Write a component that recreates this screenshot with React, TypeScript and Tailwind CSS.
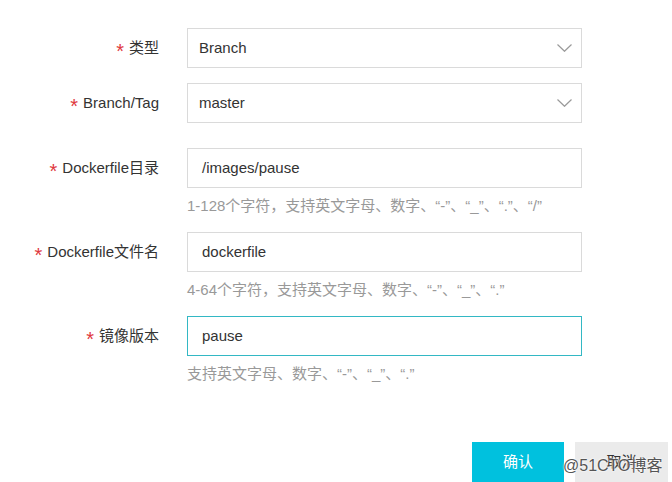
import React from "react";

const Chevron = () => (
  <svg width="15" height="8" viewBox="0 0 15 8" className="shrink-0">
    <path d="M0.5 0.5 L7.5 7.3 L14.5 0.5" fill="none" stroke="#9a9a9a" strokeWidth="1.2" />
  </svg>
);

const Label = ({ text }: { text: string }) => (
  <div className="w-[159px] shrink-0 text-right text-[15px] text-[#333] whitespace-nowrap">
    <span className="relative top-[5px] text-[20px] leading-[0] text-[#e0393e] mr-[5px]">*</span>
    {text}
  </div>
);

const SelectRow = ({ label, value, className }: { label: string; value: string; className?: string }) => (
  <div className={"flex items-center h-[40px] " + (className ?? "")}>
    <Label text={label} />
    <div className="ml-[28px] w-[395px] h-[40px] border border-[#dadada] flex items-center justify-between pl-[11px] pr-[9px]">
      <span className="text-[15px] text-[#333]">{value}</span>
      <Chevron />
    </div>
  </div>
);

const InputRow = ({
  label,
  value,
  focused,
  className,
}: {
  label: string;
  value: string;
  focused?: boolean;
  className?: string;
}) => (
  <div className={"flex items-center h-[40px] " + (className ?? "")}>
    <Label text={label} />
    <div
      className={
        "ml-[28px] w-[395px] h-[40px] border flex items-center pl-[14px] " +
        (focused ? "border-[#33b8c4]" : "border-[#dadada]")
      }
    >
      <span className="text-[15px] text-[#333]">{value}</span>
    </div>
  </div>
);

const Help = ({ text, className }: { text: string; className?: string }) => (
  <div className={"ml-[187px] h-[20px] leading-[20px] text-[15px] text-[#999] whitespace-nowrap " + (className ?? "")}>
    {text}
  </div>
);

export default function App() {
  return (
    <div
      className="relative w-[672px] h-[482px] bg-white overflow-hidden"
      style={{ fontFamily: '"Liberation Sans", "Noto Sans CJK SC", sans-serif' }}
    >
      <div className="pt-[28px] flex flex-col">
        <SelectRow label="类型" value="Branch" />
        <SelectRow label="Branch/Tag" value="master" className="mt-[15px]" />
        <InputRow label="Dockerfile目录" value="/images/pause" className="mt-[25px]" />
        <Help text="1-128个字符，支持英文字母、数字、“-”、“_”、“.”、“/”" className="mt-[8px]" />
        <InputRow label="Dockerfile文件名" value="dockerfile" className="mt-[16px]" />
        <Help text="4-64个字符，支持英文字母、数字、“-”、“_”、“.”" className="mt-[8px]" />
        <InputRow label="镜像版本" value="pause" focused className="mt-[16px]" />
        <Help text="支持英文字母、数字、“-”、“_”、“.”" className="mt-[8px]" />
        <div className="mt-[58px] ml-[472px] flex gap-[11px]">
          <button className="w-[92px] h-[40px] bg-[#00c1de] text-white text-[15px]">确认</button>
          <button className="w-[93px] h-[40px] bg-[#ebebeb] text-[#333] text-[15px]">取消</button>
        </div>
      </div>
      <div
        className="absolute left-[563px] top-[454px] text-[16px] text-[#555] whitespace-nowrap"
        style={{ textShadow: "0 0 2px #fff, 0 0 2px #fff" }}
      >
        @51CTO博客
      </div>
    </div>
  );
}
